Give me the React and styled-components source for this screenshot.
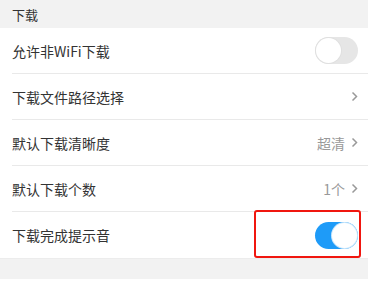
import React from "react";
import styled, { createGlobalStyle } from "styled-components";

const GlobalStyle = createGlobalStyle`
  html, body {
    margin: 0;
    padding: 0;
    background: #ffffff;
  }
  body {
    font-family: "Noto Sans CJK SC", "Noto Sans", sans-serif;
  }
`;

const Page = styled.div`
  width: 368px;
  height: 285px;
  overflow: hidden;
  background: #ffffff;
`;

const SectionTitle = styled.div`
  height: 28px;
  padding-left: 12px;
  display: flex;
  align-items: center;
  background: #f2f2f2;
  color: #333333;
  font-size: 13px;
`;

const List = styled.div`
  background: #ffffff;
`;

const Row = styled.div`
  position: relative;
  height: 46px;
  margin-left: 12px;
  padding-right: 10px;
  display: flex;
  align-items: center;
  justify-content: space-between;
  border-bottom: ${(p) => (p.last ? "none" : "1px solid #e9e9e9")};
  box-sizing: border-box;
`;

const Label = styled.span`
  color: #333333;
  font-size: 14px;
`;

const Extra = styled.div`
  display: flex;
  align-items: center;
  gap: 6px;
  color: #999999;
  font-size: 14px;
`;

const Switch = styled.div`
  position: relative;
  width: 43px;
  height: 27px;
  border-radius: 14px;
  background: ${(p) => (p.on ? "#1e9bf8" : "#e6e6e6")};
  box-sizing: border-box;

  &::after {
    content: "";
    position: absolute;
    top: 1px;
    left: ${(p) => (p.on ? "17px" : "1px")};
    width: 25px;
    height: 25px;
    border-radius: 50%;
    background: #ffffff;
    box-shadow: 0 0 0 1px ${(p) => (p.on ? "#c9e6fb" : "#e0e0e0")};
  }
`;

const Highlight = styled.div`
  position: absolute;
  left: 242px;
  top: -2px;
  width: 107px;
  height: 48px;
  border: 2px solid #f0160f;
  border-radius: 3px;
  box-sizing: border-box;
  pointer-events: none;
`;

const Footer = styled.div`
  height: 20px;
  background: #f2f2f2;
  border-top: 1px solid #ececec;
`;

const Chevron = () => (
  <svg width="7" height="11" viewBox="0 0 7 11">
    <path d="M1.5 1.5 L5.5 5.5 L1.5 9.5" fill="none" stroke="#999" strokeWidth="1.5" />
  </svg>
);

export default function App() {
  return (
    <Page>
      <GlobalStyle />
      <SectionTitle>下载</SectionTitle>
      <List>
        <Row>
          <Label>允许非WiFi下载</Label>
          <Switch />
        </Row>
        <Row>
          <Label>下载文件路径选择</Label>
          <Extra>
            <Chevron />
          </Extra>
        </Row>
        <Row>
          <Label>默认下载清晰度</Label>
          <Extra>
            超清
            <Chevron />
          </Extra>
        </Row>
        <Row>
          <Label>默认下载个数</Label>
          <Extra>
            1个
            <Chevron />
          </Extra>
        </Row>
        <Row last>
          <Label>下载完成提示音</Label>
          <Switch on />
          <Highlight />
        </Row>
      </List>
      <Footer />
    </Page>
  );
}
